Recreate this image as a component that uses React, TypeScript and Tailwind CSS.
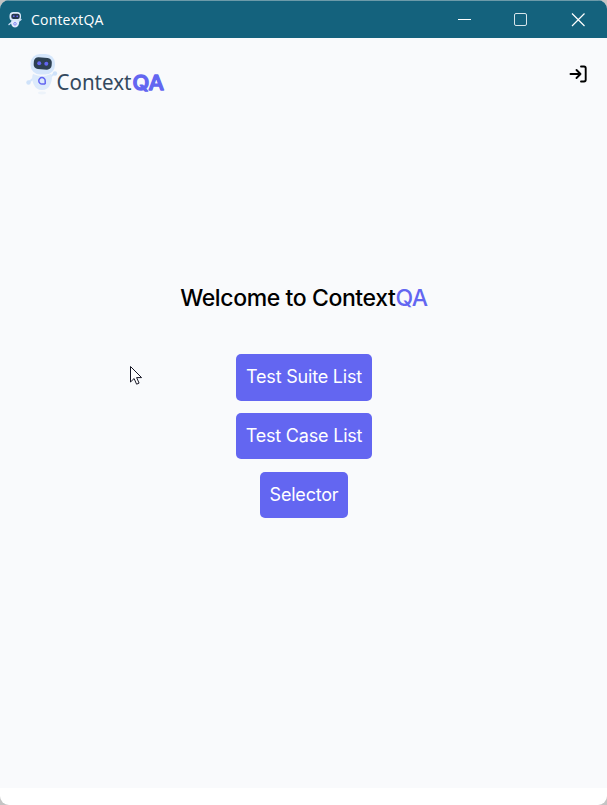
import React from "react";

function Robot({ className }: { className: string }) {
  return (
    <svg viewBox="0 0 34 46" className={className} fill="none">
      <ellipse cx="18" cy="43" rx="4" ry="1.4" fill="#edf3fa" />
      <path d="M10 28 5 32M25 28l6-5" stroke="#d5e6fb" strokeWidth="2" />
      <circle cx="4.5" cy="32.5" r="2.2" fill="#cfe2fa" />
      <circle cx="31" cy="23.5" r="2.2" fill="#cfe2fa" />
      <path d="M9 24q9 4 18 0 2 4-.5 10-2.500 6-8.500 6t-8.500-6Q7 28 9 24Z" fill="#dceafb" />
      <rect x="6.500" y="4" width="24.500" height="20.500" rx="9.500" fill="#d5e6fb" />
      <rect x="9.700" y="7.600" width="18" height="11.800" rx="4.500" fill="#2d4052" transform="rotate(4 19 14)" />
      <circle cx="15.200" cy="13.200" r="2" fill="#6366f1" />
      <circle cx="22.300" cy="13.800" r="2" fill="#6366f1" />
      <path d="M21.300 34h-3a3.200 3.200 0 1 1 2.900-3.200v3.200" stroke="#6366f1" strokeWidth="1.500" />
    </svg>
  );
}

function AppIcon() {
  return (
    <svg className="h-[18px] w-[16px]" viewBox="0 0 16 18" fill="none">
      <path d="m5 11-3 2.500M11 11l3-2.500" stroke="#c8dcf5" strokeWidth="1.400" strokeLinecap="round" />
      <path d="M4.500 9.500h7.300q1 2.500-.3 4.800-1.200 2.200-3.500 2.200t-3.400-2.200q-1.200-2.300-.1-4.800Z" fill="#dfeafd" />
      <rect x="2.500" y="1" width="11.500" height="9" rx="4" fill="#dceafb" />
      <rect x="4.300" y="2.700" width="8.400" height="5.300" rx="2" fill="#26384f" />
      <circle cx="6.800" cy="5.200" r=".9" fill="#6366f1" />
      <circle cx="10.200" cy="5.300" r=".9" fill="#6366f1" />
      <circle cx="8" cy="12.800" r="1.300" stroke="#8587f5" />
    </svg>
  );
}

function TitleBar() {
  return (
    <header className="flex h-[38px] shrink-0 items-center border-t border-[#6c9aa9] bg-[#14627d] pl-[7px] text-white">
      <AppIcon />
      <span className="ml-2 font-['Open_Sans','Noto_Sans',sans-serif] text-[14px] tracking-[0.2px]">ContextQA</span>
      <div className="ml-auto flex items-center pr-[21px]">
        <svg className="h-4 w-4" viewBox="0 0 16 16" stroke="white"><path d="M2 7.500h13" /></svg>
        <svg className="ml-[41px] h-4 w-4" viewBox="0 0 16 16" stroke="#d7e5ea" fill="none"><rect x="1.500" y="1.500" width="12" height="12" rx="1.500" /></svg>
        <svg className="ml-[41px] h-4 w-4" viewBox="0 0 16 16" stroke="white" strokeWidth="1.200"><path d="m2 1.500 12.500 12.500m0-12.500L2 14" /></svg>
      </div>
    </header>
  );
}

function Logo() {
  return (
    <div className="flex">
      <Robot className="h-[46px] w-[34px]" />
      <svg className="-ml-1 h-[46px] w-[114px] overflow-visible" viewBox="0 0 114 46">
        <text x="2.500" y="39.500" textLength="75" lengthAdjust="spacingAndGlyphs" className="fill-[#34495e] font-['Noto_Sans','Open_Sans',sans-serif] text-[21px]">Context</text>
        <text x="78.500" y="39.800" textLength="31.500" lengthAdjust="spacingAndGlyphs" strokeLinejoin="round" className="fill-[#6366f1] stroke-[#6366f1] stroke-[1.300px] font-['Inter',sans-serif] text-[20.5px] font-medium">QA</text>
      </svg>
    </div>
  );
}

function ActionButton({ children }: { children: React.ReactNode }) {
  return (
    <button className="h-[46.5px] whitespace-nowrap rounded-[5px] bg-[#6366f1] px-2.5 pb-px text-[18px] leading-[27px] tracking-[-0.2px] text-white">
      {children}
    </button>
  );
}

export default function App() {
  return (
    <div className="h-[805px] w-[607px] overflow-hidden bg-[#c4c4c4]">
      <div className="relative flex h-full flex-col overflow-hidden rounded-[9px] bg-white font-['Inter',sans-serif]">
        <TitleBar />
        <main className="flex h-[750px] flex-col bg-[#f9fafc]">
          <div className="flex items-start justify-between pl-6 pr-[19px] pt-3">
            <Logo />
            <button aria-label="Log in" className="mt-[14px]">
              <svg className="h-5 w-5" viewBox="0 0 20 20" fill="none" stroke="black" strokeWidth="1.900" strokeLinecap="round" strokeLinejoin="round">
                <path d="M2.500 10h10M8.500 6l4 4-4 4M13 2.500h3q1.700 0 1.700 1.700v11.600q0 1.700-1.700 1.700h-3" />
              </svg>
            </button>
          </div>
          <div className="mt-[186px] flex flex-col items-center">
            <h1 className="whitespace-nowrap pl-px pt-px text-[23px] font-medium leading-[31px] tracking-[-0.4px]">
              Welcome to Context<span className="text-[#6366f1]">QA</span>
            </h1>
            <div className="mt-10 flex flex-col items-center gap-[12.4px] pl-px">
              <ActionButton>Test Suite List</ActionButton>
              <ActionButton>Test Case List</ActionButton>
              <ActionButton>Selector</ActionButton>
            </div>
          </div>
        </main>
        <svg className="absolute left-[129px] top-[365px] h-[21px] w-[14px]" viewBox="0 0 14 21" fill="white" stroke="#171725">
          <path d="M1.500 1.500v15.500l3.600-3.500 2.500 5.700 2.500-1.100-2.500-5.500h5Z" />
        </svg>
      </div>
    </div>
  );
}
